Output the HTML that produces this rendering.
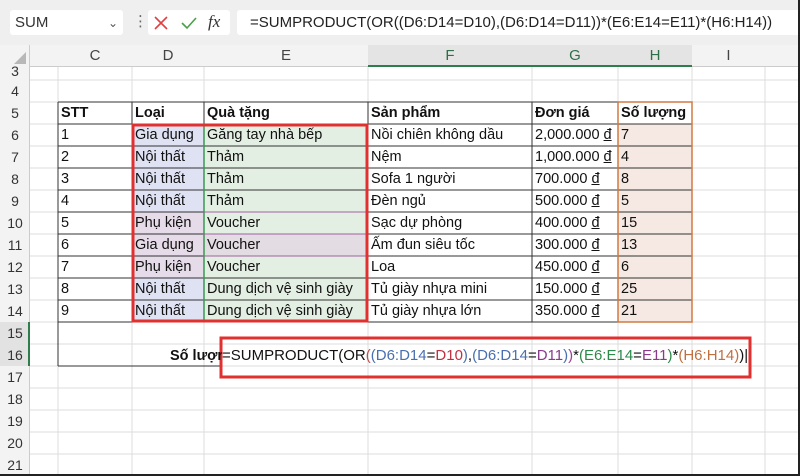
<!DOCTYPE html>
<html><head><meta charset="utf-8"><style>
body{margin:0;width:800px;height:476px;overflow:hidden;background:#fff;font-family:"Liberation Sans","DejaVu Sans",sans-serif;position:relative}
.a{position:absolute;box-sizing:border-box}
.t{position:absolute;font-size:14.5px;line-height:22px;white-space:nowrap;color:#111}
.rh{position:absolute;left:0;width:30px;text-align:center;font-size:14px;color:#333;line-height:22px}
.ch{position:absolute;top:45px;height:22px;line-height:22px;text-align:center;font-size:15px;color:#444}
</style></head><body>
<div class="a" style="left:0;top:0;width:800px;height:45px;background:#efefef"></div>
<div class="a" style="left:10px;top:10px;width:113px;height:25px;background:#fff;border-radius:3px"></div>
<div class="t" style="left:15px;top:12px;font-size:15px;color:#333">SUM</div>
<div class="t" style="left:108px;top:12px;font-size:12px;color:#555">&#8964;</div>
<div class="t" style="left:133px;top:11px;font-size:15px;color:#666">⋮</div>
<div class="a" style="left:148px;top:10px;width:82px;height:25px;background:#fff;border-radius:3px"></div>
<svg class="a" style="left:150px;top:13px" width="80" height="20"><path d="M5 4L17 16M17 4L5 16" stroke="#e04040" stroke-width="1.6"/><path d="M32 10l5 5 9-10" stroke="#4aa04a" stroke-width="1.6" fill="none"/></svg>
<div class="t" style="left:208px;top:11px;font-family:'Liberation Serif',serif;font-style:italic;font-size:17px;color:#333">fx</div>
<div class="a" style="left:237px;top:10px;width:563px;height:25px;background:#fff;border-radius:3px"></div>
<div class="t" style="left:250px;top:12px;font-size:15px;color:#222">=SUMPRODUCT(OR((D6:D14=D10),(D6:D14=D11))*(E6:E14=E11)*(H6:H14))</div>
<div class="a" style="left:0;top:45px;width:800px;height:22px;background:#f3f3f3;border-bottom:1px solid #ccc"></div>
<div class="a" style="left:0;top:45px;width:30px;height:431px;background:#f3f3f3;border-right:1px solid #ccc"></div>
<div class="a" style="left:368px;top:45px;width:324px;height:22px;background:#e4e4e4;border-bottom:2px solid #2e7d4a"></div>
<svg class="a" style="left:12px;top:50px" width="16" height="16"><path d="M14 2L14 14L2 14Z" fill="#b8b8b8"/></svg>
<div class="ch" style="left:58px;width:74px">C</div><div class="ch" style="left:132px;width:72px">D</div><div class="ch" style="left:204px;width:164px">E</div><div class="ch" style="left:368px;width:164px;color:#2e6e48">F</div><div class="ch" style="left:532px;width:86px;color:#2e6e48">G</div><div class="ch" style="left:618px;width:74px;color:#2e6e48">H</div><div class="ch" style="left:692px;width:73px">I</div>
<svg class="a" style="left:30px;top:67px" width="770" height="409">
<g stroke="#dcdcdc" stroke-width="1">
<path d="M28 0V409M102 0V409M174 0V409M338 0V409M502 0V409M588 0V409M662 0V409M735 0V409"/>
<path d="M0 13H770M0 35H770M0 57H770M0 79H770M0 101H770M0 123H770M0 145H770M0 167H770M0 189H770M0 211H770M0 233H770M0 255H770M0 277H770M0 299H770M0 321H770M0 343H770M0 365H770M0 387H770"/>
</g></svg>
<div class="rh" style="top:60px">3</div>
<div class="rh" style="top:80px">4</div><div class="rh" style="top:102px">5</div><div class="rh" style="top:124px">6</div><div class="rh" style="top:146px">7</div><div class="rh" style="top:168px">8</div><div class="rh" style="top:190px">9</div><div class="rh" style="top:212px">10</div><div class="rh" style="top:234px">11</div><div class="rh" style="top:256px">12</div><div class="rh" style="top:278px">13</div><div class="rh" style="top:300px">14</div>
<div class="a" style="left:0;top:322px;width:30px;height:44px;background:#e2e2e2;border-right:2px solid #2e7d4a"></div>
<div class="rh" style="top:322px">15</div><div class="rh" style="top:344px">16</div><div class="rh" style="top:366px">17</div><div class="rh" style="top:388px">18</div><div class="rh" style="top:410px">19</div><div class="rh" style="top:432px">20</div><div class="rh" style="top:454px">21</div>
<div class="a" style="left:132px;top:124px;width:72px;height:88px;background:#dfe2f3"></div>
<div class="a" style="left:132px;top:212px;width:72px;height:66px;background:#e6dbe8"></div>
<div class="a" style="left:132px;top:278px;width:72px;height:44px;background:#dfe2f3"></div>
<div class="a" style="left:204px;top:124px;width:164px;height:198px;background:#e4efe4"></div>
<div class="a" style="left:204px;top:234px;width:164px;height:22px;background:#e3dde3"></div>
<div class="a" style="left:618px;top:124px;width:74px;height:198px;background:#f6e8e2"></div>
<svg class="a" style="left:0;top:0" width="800" height="476">
<g stroke="#333" stroke-width="1">
<path d="M58 102H692M58 124H692M58 146H692M58 168H692M58 190H692M58 212H692M58 234H692M58 256H692M58 278H692M58 300H692M58 322H692"/>
<path d="M58 102V366M132 102V322M204 102V322M368 102V322M532 102V322M618 102V322M692 102V322M58 366H220"/>
</g>
<path d="M204 124V322" stroke="#3a9a50" stroke-width="1.5"/>
<path d="M204 212H368M204 234H368M204 256H368" stroke="#a060a0" stroke-width="1"/>
<rect x="618" y="102" width="74" height="220" fill="none" stroke="#d07a40" stroke-width="1.5"/>
<rect x="133" y="125" width="234" height="196" fill="none" stroke="#e03030" stroke-width="3"/>
<rect x="221" y="338" width="529" height="39" fill="none" stroke="#e03030" stroke-width="3"/>
</svg>
<div class="t" style="left:61px;top:102px;font-weight:bold">STT</div>
<div class="t" style="left:135px;top:102px;font-weight:bold">Loại</div>
<div class="t" style="left:207px;top:102px;font-weight:bold">Quà tặng</div>
<div class="t" style="left:371px;top:102px;font-weight:bold">Sản phẩm</div>
<div class="t" style="left:535px;top:102px;font-weight:bold">Đơn giá</div>
<div class="t" style="left:621px;top:102px;font-weight:bold">Số lượng</div>

<div class="t" style="left:61px;top:124px">1</div><div class="t" style="left:135px;top:124px">Gia dụng</div><div class="t" style="left:207px;top:124px">Găng tay nhà bếp</div><div class="t" style="left:371px;top:124px">Nồi chiên không dầu</div><div class="t" style="left:535px;top:124px">2,000.000 <u>đ</u></div><div class="t" style="left:621px;top:124px">7</div>
<div class="t" style="left:61px;top:146px">2</div><div class="t" style="left:135px;top:146px">Nội thất</div><div class="t" style="left:207px;top:146px">Thảm</div><div class="t" style="left:371px;top:146px">Nệm</div><div class="t" style="left:535px;top:146px">1,000.000 <u>đ</u></div><div class="t" style="left:621px;top:146px">4</div>
<div class="t" style="left:61px;top:168px">3</div><div class="t" style="left:135px;top:168px">Nội thất</div><div class="t" style="left:207px;top:168px">Thảm</div><div class="t" style="left:371px;top:168px">Sofa 1 người</div><div class="t" style="left:535px;top:168px">700.000 <u>đ</u></div><div class="t" style="left:621px;top:168px">8</div>
<div class="t" style="left:61px;top:190px">4</div><div class="t" style="left:135px;top:190px">Nội thất</div><div class="t" style="left:207px;top:190px">Thảm</div><div class="t" style="left:371px;top:190px">Đèn ngủ</div><div class="t" style="left:535px;top:190px">500.000 <u>đ</u></div><div class="t" style="left:621px;top:190px">5</div>
<div class="t" style="left:61px;top:212px">5</div><div class="t" style="left:135px;top:212px">Phụ kiện</div><div class="t" style="left:207px;top:212px">Voucher</div><div class="t" style="left:371px;top:212px">Sạc dự phòng</div><div class="t" style="left:535px;top:212px">400.000 <u>đ</u></div><div class="t" style="left:621px;top:212px">15</div>
<div class="t" style="left:61px;top:234px">6</div><div class="t" style="left:135px;top:234px">Gia dụng</div><div class="t" style="left:207px;top:234px">Voucher</div><div class="t" style="left:371px;top:234px">Ấm đun siêu tốc</div><div class="t" style="left:535px;top:234px">300.000 <u>đ</u></div><div class="t" style="left:621px;top:234px">13</div>
<div class="t" style="left:61px;top:256px">7</div><div class="t" style="left:135px;top:256px">Phụ kiện</div><div class="t" style="left:207px;top:256px">Voucher</div><div class="t" style="left:371px;top:256px">Loa</div><div class="t" style="left:535px;top:256px">450.000 <u>đ</u></div><div class="t" style="left:621px;top:256px">6</div>
<div class="t" style="left:61px;top:278px">8</div><div class="t" style="left:135px;top:278px">Nội thất</div><div class="t" style="left:207px;top:278px">Dung dịch vệ sinh giày</div><div class="t" style="left:371px;top:278px">Tủ giày nhựa mini</div><div class="t" style="left:535px;top:278px">150.000 <u>đ</u></div><div class="t" style="left:621px;top:278px">25</div>
<div class="t" style="left:61px;top:300px">9</div><div class="t" style="left:135px;top:300px">Nội thất</div><div class="t" style="left:207px;top:300px">Dung dịch vệ sinh giày</div><div class="t" style="left:371px;top:300px">Tủ giày nhựa lớn</div><div class="t" style="left:535px;top:300px">350.000 <u>đ</u></div><div class="t" style="left:621px;top:300px">21</div>

<div class="t" style="left:170px;top:345px;width:52px;overflow:hidden;font-weight:bold">Số lượng</div>
<div class="t" style="left:222px;top:345px;font-size:15px">=SUMPRODUCT(OR<span style="color:#c05050">(</span><span style="color:#4a6fb0">(D6:D14</span>=<span style="color:#c03040">D10</span><span style="color:#4a6fb0">)</span>,<span style="color:#4a6fb0">(D6:D14</span>=<span style="color:#8a3a8a">D11</span><span style="color:#4a6fb0">)</span><span style="color:#a04090">)</span>*<span style="color:#2e8a4a">(E6:E14</span>=<span style="color:#8a3a8a">E11</span><span style="color:#2e8a4a">)</span>*<span style="color:#c07040">(H6:H14)</span>)|</div>
<div class="a" style="left:0;top:474px;width:800px;height:2px;background:#222"></div>
<div class="a" style="left:798px;top:0;width:2px;height:476px;background:#222"></div>
</body></html>
